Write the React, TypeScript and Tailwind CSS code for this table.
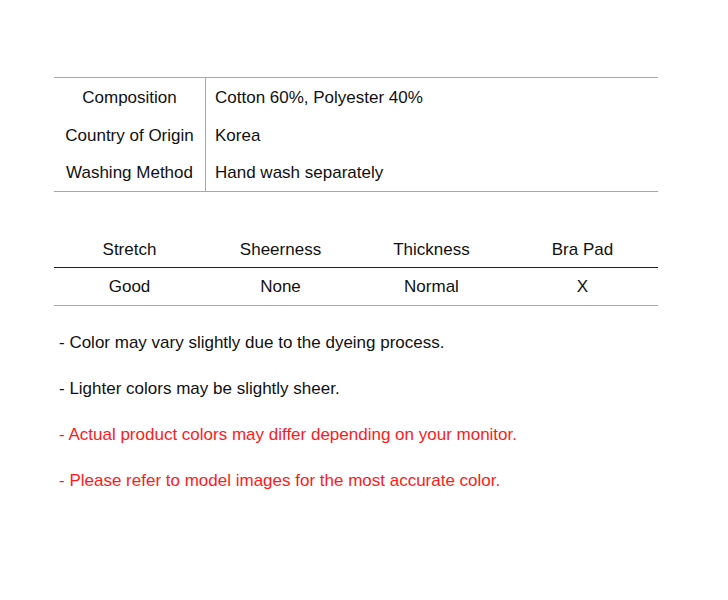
export default function App() {
  const specs = [
    { label: "Composition", value: "Cotton 60%, Polyester 40%" },
    { label: "Country of Origin", value: "Korea" },
    { label: "Washing Method", value: "Hand wash separately" },
  ];
  const headers = ["Stretch", "Sheerness", "Thickness", "Bra Pad"];
  const values = ["Good", "None", "Normal", "X"];
  const notes = [
    { text: "- Color may vary slightly due to the dyeing process.", red: false },
    { text: "- Lighter colors may be slightly sheer.", red: false },
    { text: "- Actual product colors may differ depending on your monitor.", red: true },
    { text: "- Please refer to model images for the most accurate color.", red: true },
  ];

  return (
    <div className="min-h-[600px] bg-white pt-[77px] font-['Liberation_Sans',Arial,sans-serif] text-[17px] text-[#111]">
      <div className="ml-[54px] w-[604px]">
        {/* Product info */}
        <div className="border-y border-[#a8a8a8]">
          {specs.map((row, i) => (
            <div key={row.label} className={`flex pt-[1px] ${i === 2 ? "h-[37px]" : "h-[38px]"}`}>
              <div className="-mt-[1px] flex w-[152px] items-center justify-center border-r border-[#a8a8a8] pt-[1px]">
                {row.label}
              </div>
              <div className="flex flex-1 items-center pl-[9px]">{row.value}</div>
            </div>
          ))}
        </div>

        {/* Fit details */}
        <div className="mt-[39px]">
          <div className="grid h-[37px] grid-cols-4 border-b border-[#222] pt-[1px]">
            {headers.map((h) => (
              <div key={h} className="flex items-center justify-center">
                {h}
              </div>
            ))}
          </div>
          <div className="grid h-[38px] grid-cols-4 border-b border-[#a8a8a8] pt-[1px]">
            {values.map((v) => (
              <div key={v} className="flex items-center justify-center">
                {v}
              </div>
            ))}
          </div>
        </div>

        {/* Notes */}
        <div className="mt-[27px] flex flex-col gap-[27px] pl-[5px]">
          {notes.map((n) => (
            <p key={n.text} className={`leading-[19px] ${n.red ? "text-[#ff1a1a]" : "text-[#111]"}`}>
              {n.text}
            </p>
          ))}
        </div>
      </div>
    </div>
  );
}
